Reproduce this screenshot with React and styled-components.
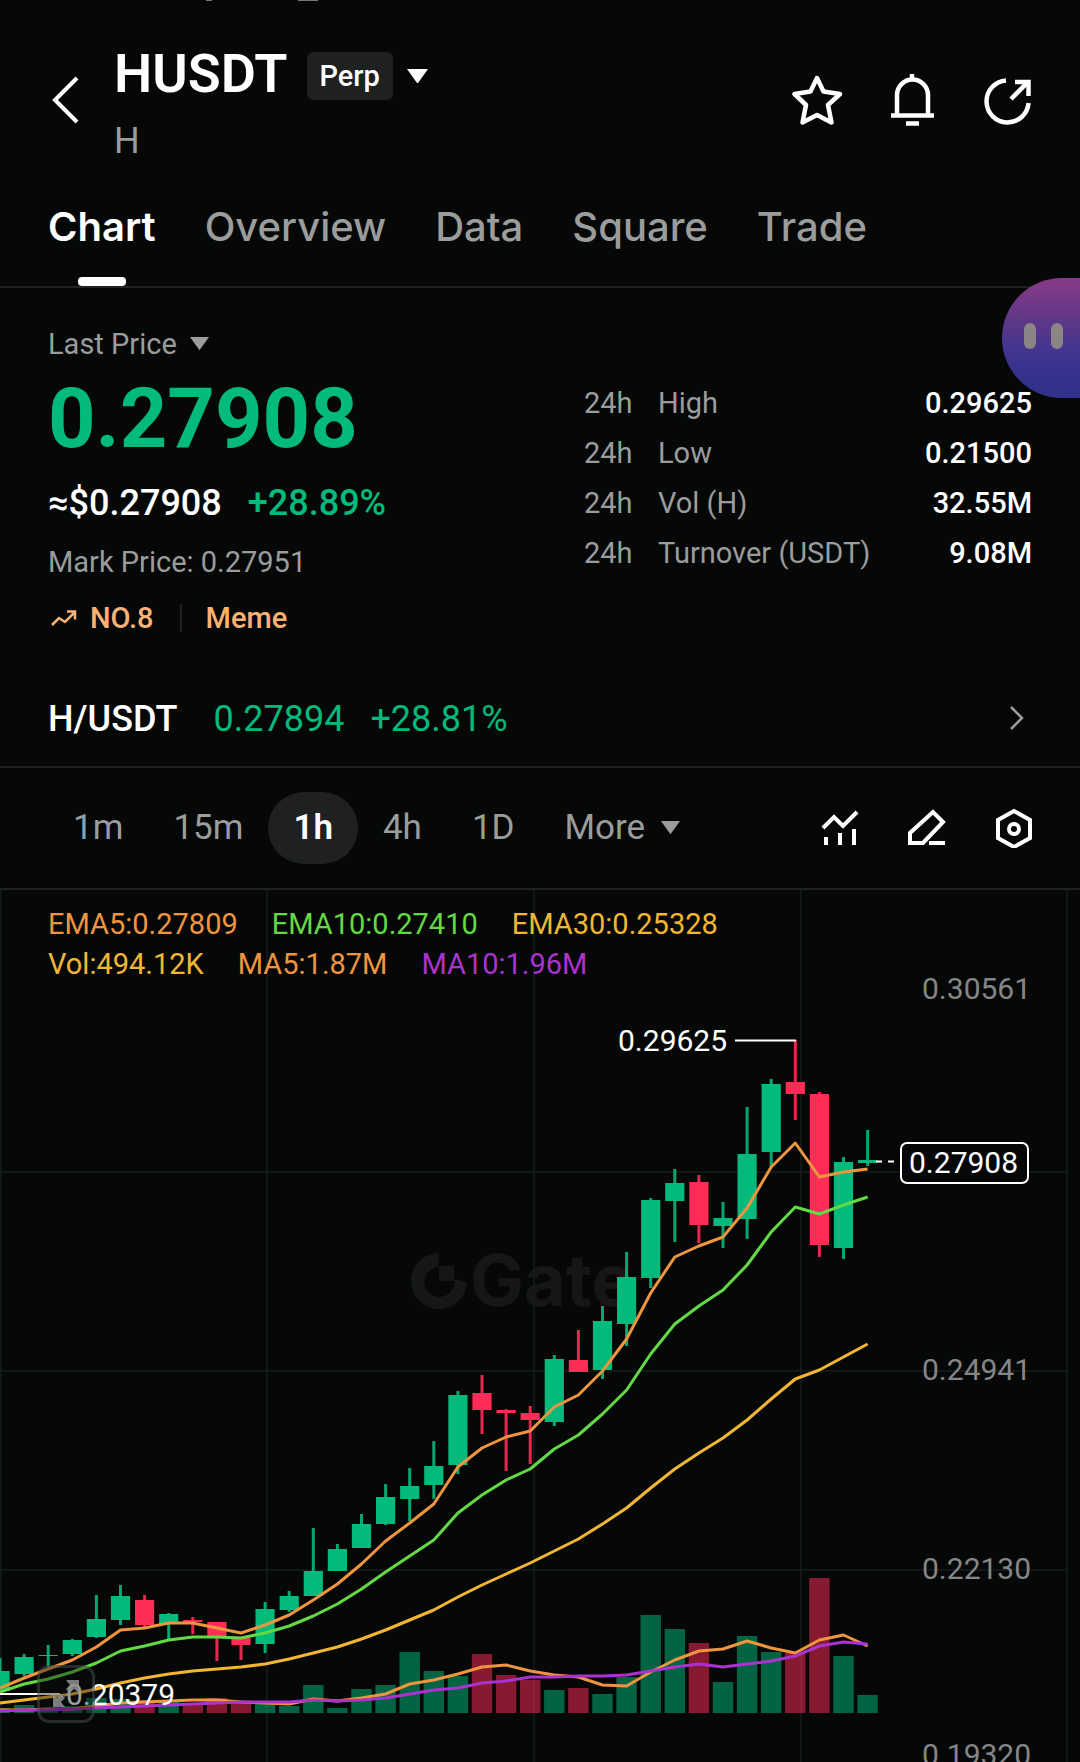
import React, { useState } from 'react';
import styled, { createGlobalStyle } from 'styled-components';

const GREEN = '#02ba7b';
const RED = '#ff2c58';
const ORANGE = '#f0953f';
const LIME = '#63d945';
const YELLOW = '#f2b632';
const PURPLE = '#ac32cf';

const GlobalStyle = createGlobalStyle`
    * {
        box-sizing: border-box;
    }
    body {
        margin: 0;
        background: #060808;
        color: #fff;
        font-family: Roboto, "Liberation Sans", sans-serif;
        font-size: 29px;
        line-height: 40px;
    }
    button {
        border: 0;
        padding: 0;
        background: none;
        color: inherit;
        font: inherit;
        cursor: pointer;
    }
    a {
        color: inherit;
        text-decoration: none;
    }
    svg {
        display: block;
        flex: none;
    }
`

const Page = styled.div`
    position: relative;
    overflow: hidden;
`

const StatusEdge = styled.div`
    display: flex;
    gap: 86px;
    height: 40px;
    padding-left: 206px;
    i {
        width: 6px;
        height: 1px;
        background: #777;
    }
    i + i {
        width: 20px;
    }
`

const Header = styled.header`
    display: flex;
    align-items: center;
    padding: 0 48px;
`

const BackButton = styled.button`
    width: 66px;
`

const TitleBlock = styled.div`
    flex: 1;
`

const TitleRow = styled.div`
    display: flex;
    align-items: center;
    height: 68px;
    padding-top: 4px;
    h1 {
        margin: 0 19px 0 0;
        padding-bottom: 4px;
        font-size: 54px;
        line-height: 60px;
        font-weight: 600;
    }
`

const Badge = styled.span`
    height: 48px;
    margin-right: 14px;
    padding: 0 13px;
    border-radius: 6px;
    background: #1f2121;
    font-weight: 500;
    line-height: 48px;
`

const Subtitle = styled.div`
    margin-top: 14px;
    color: #9b9c9c;
    font-size: 36px;
    line-height: 38px;
`

const IconRow = styled.div`
    display: flex;
    align-items: center;
    gap: ${props => props.$gap}px;
`

const Tabs = styled.nav`
    display: flex;
    gap: 49px;
    padding: 43px 48px 0;
    border-bottom: 2px solid #1f2121;
`

const Tab = styled.a`
    display: flex;
    flex-direction: column;
    align-items: center;
    gap: 26px;
    color: ${props => props.$active ? '#fff' : '#9b9c9c'};
    font-family: Inter, "Liberation Sans", sans-serif;
    font-size: 40px;
    line-height: 48px;
    font-weight: ${props => props.$active ? 600 : 500};
    &::after {
        content: "";
        width: 48px;
        height: 9px;
        border-radius: 4px;
        background: ${props => props.$active ? '#fff' : 'transparent'};
    }
`

const Assistant = styled.button`
    position: absolute;
    top: 278px;
    right: 0;
    display: flex;
    align-items: center;
    gap: 15px;
    width: 78px;
    height: 120px;
    padding: 0 0 4px 22px;
    border-radius: 60px 0 0 60px;
    background: linear-gradient(#883a85, #5b3788 38%, #443590 60%, #32328b 85%);
    i {
        width: 12px;
        height: 26px;
        border-radius: 6px;
        background: #8b8586;
    }
`

const Ticker = styled.section`
    display: flex;
    justify-content: space-between;
    padding: 36px 48px 32px;
`

const PriceType = styled.button`
    display: flex;
    align-items: center;
    gap: 13px;
    color: #9b9c9c;
`

const BigPrice = styled.div`
    margin: 13px 0 20px;
    color: ${GREEN};
    font-size: 83px;
    line-height: 84px;
    font-weight: 700;
`

const Converted = styled.div`
    display: flex;
    gap: 26px;
    font-size: 36px;
    line-height: 44px;
    font-weight: 500;
    span {
        color: ${GREEN};
    }
`

const MarkPrice = styled.div`
    margin: 17px 0 16px;
    color: #9b9c9c;
`

const Tags = styled.div`
    display: flex;
    align-items: center;
    color: #fcb273;
    font-weight: 500;
    svg {
        margin-right: 12px;
    }
    a {
        display: flex;
        align-items: center;
    }
    a + a {
        margin-left: 26px;
        padding-left: 24px;
        border-left: 2px solid #1f2121;
        line-height: 28px;
    }
`

const Stats = styled.table`
    align-self: flex-start;
    width: 448px;
    margin-top: 54px;
    border-collapse: collapse;
    th, td {
        height: 50px;
        padding: 0;
        color: #9b9c9c;
        font-weight: 400;
        text-align: left;
        white-space: nowrap;
    }
    th {
        width: 74px;
    }
    td:last-child {
        color: #fff;
        font-weight: 500;
        text-align: right;
    }
`

const SpotLink = styled.a`
    display: flex;
    align-items: center;
    height: 98px;
    padding: 2px 48px 0;
    border-bottom: 2px solid #1f2121;
    font-size: 36px;
    color: ${GREEN};
    strong {
        margin-right: 36px;
        color: #fff;
        font-weight: 500;
    }
    span {
        margin-right: 26px;
    }
    svg {
        margin-left: auto;
    }
`

const Toolbar = styled.div`
    display: flex;
    align-items: center;
    justify-content: space-between;
    height: 122px;
    padding: 0 48px;
    border-bottom: 2px solid #1f2121;
`

const Periods = styled.div`
    display: flex;
`

const Period = styled.button`
    display: flex;
    align-items: center;
    gap: 16px;
    height: 72px;
    padding: 0 25px;
    border-radius: 36px;
    background: ${props => props.$active ? '#1f2121' : 'none'};
    color: ${props => props.$active ? '#fff' : '#9b9c9c'};
    font-size: 35px;
    font-weight: ${props => props.$active ? 600 : 400};
`

const ChartPanel = styled.section`
    position: relative;
`

const Legend = styled.div`
    position: absolute;
    top: 14px;
    left: 48px;
`

const LegendRow = styled.div`
    display: flex;
    gap: 34px;
`

const LegendItem = styled.span`
    color: ${props => props.$color};
`

const ExpandButton = styled.button`
    position: absolute;
    left: 37px;
    bottom: 39px;
    width: 58px;
    height: 58px;
    border: 3px solid rgba(120, 124, 124, 0.3);
    border-radius: 12px;
    background: rgba(10, 12, 12, 0.4);
    display: flex;
    align-items: center;
    justify-content: center;
`

const ChartSvg = styled.svg`
    width: 100%;
    height: auto;
    text {
        font-size: 30px;
        fill: #fff;
    }
    .axis {
        fill: #858686;
    }
    .brand {
        font: 700 72px Inter, sans-serif;
        fill: #151717;
    }
`

const stats = [
    ['High', '0.29625'],
    ['Low', '0.21500'],
    ['Vol (H)', '32.55M'],
    ['Turnover (USDT)', '9.08M'],
];

const STEP = 24.1;

// [up, body top, body bottom, wick top, wick bottom, volume top]
const candles = [
    [1, 1671, 1691, 1658, 1692, 1708],
    [1, 1657, 1674, 1654, 1676, 1705],
    [1, 1655, 1656, 1645, 1667, 1709],
    [1, 1640, 1654, 1639, 1656, 1706],
    [1, 1619, 1637, 1595, 1638, 1698],
    [1, 1596, 1620, 1585, 1625, 1699],
    [0, 1600, 1625, 1595, 1627, 1700],
    [1, 1614, 1624, 1613, 1639, 1701],
    [0, 1620, 1622, 1617, 1634, 1703],
    [0, 1622, 1636, 1622, 1661, 1698],
    [0, 1638, 1645, 1638, 1660, 1703],
    [1, 1609, 1644, 1602, 1653, 1703],
    [1, 1596, 1610, 1591, 1612, 1706],
    [1, 1571, 1596, 1528, 1596, 1685],
    [1, 1549, 1571, 1544, 1571, 1708],
    [1, 1524, 1548, 1514, 1548, 1689],
    [1, 1497, 1524, 1484, 1525, 1685],
    [1, 1486, 1499, 1468, 1521, 1652],
    [1, 1466, 1485, 1441, 1499, 1671],
    [1, 1395, 1465, 1391, 1474, 1676],
    [0, 1393, 1410, 1375, 1434, 1654],
    [0, 1410, 1413, 1409, 1471, 1675],
    [0, 1413, 1420, 1406, 1464, 1680],
    [1, 1359, 1422, 1355, 1426, 1690],
    [0, 1360, 1372, 1330, 1372, 1688],
    [1, 1321, 1370, 1306, 1379, 1694],
    [1, 1277, 1324, 1252, 1346, 1677],
    [1, 1200, 1278, 1198, 1288, 1615],
    [1, 1183, 1201, 1169, 1242, 1629],
    [0, 1182, 1225, 1175, 1243, 1643],
    [1, 1218, 1226, 1202, 1248, 1682],
    [1, 1154, 1219, 1107, 1239, 1636],
    [1, 1084, 1152, 1079, 1167, 1652],
    [0, 1082, 1094, 1040, 1120, 1653],
    [0, 1094, 1245, 1092, 1257, 1578],
    [1, 1162, 1248, 1157, 1259, 1656],
    [1, 1160, 1163, 1130, 1166, 1695],
];

const ema5 = [1688, 1678, 1669, 1660, 1647, 1630, 1628, 1623, 1623, 1628, 1633, 1625, 1615, 1600, 1584, 1564, 1541, 1523, 1504, 1467, 1448, 1437, 1431, 1407, 1395, 1371, 1339, 1293, 1257, 1246, 1237, 1208, 1167, 1143, 1177, 1172, 1169];
const ema10 = [1692, 1684, 1679, 1672, 1663, 1651, 1646, 1640, 1637, 1637, 1638, 1633, 1626, 1616, 1604, 1589, 1572, 1556, 1540, 1513, 1495, 1480, 1469, 1449, 1435, 1414, 1390, 1354, 1324, 1306, 1290, 1265, 1232, 1207, 1214, 1205, 1197];
const ema30 = [1703, 1700, 1697, 1694, 1689, 1683, 1678, 1674, 1671, 1669, 1667, 1664, 1659, 1653, 1647, 1639, 1630, 1620, 1610, 1597, 1585, 1574, 1563, 1551, 1539, 1524, 1508, 1488, 1469, 1453, 1438, 1420, 1399, 1379, 1370, 1357, 1344];
const volMa5 = [1710, 1710, 1709, 1709, 1706, 1703, 1702, 1701, 1700, 1700, 1702, 1703, 1704, 1699, 1701, 1698, 1694, 1684, 1680, 1674, 1667, 1665, 1671, 1675, 1677, 1685, 1686, 1672, 1660, 1651, 1649, 1641, 1648, 1653, 1640, 1635, 1646];
const volMa10 = [1711, 1710, 1710, 1709, 1708, 1707, 1706, 1705, 1704, 1703, 1702, 1702, 1702, 1700, 1701, 1700, 1698, 1694, 1690, 1688, 1683, 1681, 1677, 1677, 1676, 1676, 1675, 1671, 1667, 1664, 1667, 1664, 1661, 1656, 1646, 1642, 1644];

const Caret = ({ size = 19 }) => (
    <svg width={size} height={size * 0.7} viewBox="0 0 20 14" fill="currentColor"><path d="M0 0h20L10 14z" /></svg>
);

const Line = ({ values, color }) => (
    <polyline
        points={values.map((y, i) => `${i * STEP},${y}`).join(' ')}
        fill="none"
        stroke={color}
        strokeWidth="3"
        strokeLinejoin="round"
    />
);

const PriceChart = () => (
    <ChartSvg viewBox="0 890 1080 872" role="img" aria-label="HUSDT 1h candles">
        <path d="M439 1253A28 28 0 1 0 467 1282L454 1279A15 15 0 1 1 438 1267Z" fill="#151717" />
        <path d="M439 1266h15v15h-15z" fill="#151717" />
        <text className="brand" x="470" y="1306">Gate</text>

        <g stroke="#191b1b" strokeWidth="1.5">
            {[1, 267, 534, 801, 1067].map(x => <path key={x} d={`M${x} 890V1762`} />)}
            {[1172, 1371, 1570].map(y => <path key={y} d={`M0 ${y}H1067`} />)}
        </g>

        {candles.map(([up, top, bottom, high, low, vol], i) => (
            <g key={i} fill={up ? GREEN : RED}>
                <rect x={i * STEP - 10.2} y={vol} width="20.4" height={1713 - vol} opacity="0.52" />
                <rect x={i * STEP - 1.5} y={high} width="3" height={low - high} opacity="0.9" />
                <rect x={i * STEP - 9.6} y={top} width="19.2" height={bottom - top} />
            </g>
        ))}

        <Line values={ema30} color={YELLOW} />
        <Line values={ema10} color={LIME} />
        <Line values={ema5} color={ORANGE} />
        <Line values={volMa5} color={ORANGE} />
        <Line values={volMa10} color={PURPLE} />

        <text className="axis" x="922" y="999">0.30561</text>
        <text className="axis" x="922" y="1380">0.24941</text>
        <text className="axis" x="922" y="1579">0.22130</text>
        <text className="axis" x="922" y="1765">0.19320</text>

        <path d="M735 1040.500H796M0 1694H60" stroke="#fff" strokeWidth="2" />
        <text x="618" y="1051">0.29625</text>
        <text x="66" y="1705">0.20379</text>

        <path d="M876 1161.500H900" stroke="#fff" strokeWidth="2" strokeDasharray="6 6" />
        <rect x="901" y="1143" width="127" height="40" rx="6" fill="#060808" stroke="#fff" strokeWidth="2" />
        <text x="909" y="1173">0.27908</text>
    </ChartSvg>
);

const App = () => {
    const [tab, setTab] = useState('Chart');
    const [period, setPeriod] = useState('1h');

    return (
        <Page>
            <GlobalStyle />
            <StatusEdge><i /><i /></StatusEdge>

            <Header>
                <BackButton aria-label="Back">
                    <svg width="34" height="48" viewBox="0 0 34 48" fill="none" stroke="#fff" strokeWidth="4"><path d="M29 2L7 24l22 22" /></svg>
                </BackButton>
                <TitleBlock>
                    <TitleRow>
                        <h1>HUSDT</h1>
                        <Badge>Perp</Badge>
                        <Caret size={21} />
                    </TitleRow>
                    <Subtitle>H</Subtitle>
                </TitleBlock>
                <IconRow $gap={44}>
                    <button aria-label="Favourite">
                        <svg width="52" height="52" viewBox="0 0 52 52" fill="none" stroke="#fff" strokeWidth="4.500" strokeLinejoin="round">
                            <path d="M25 4l6.500 13.500L48 20 36 31l3.500 17.500L25 41 10.500 48.500 14 31 2.500 20l16-2.500z" />
                        </svg>
                    </button>
                    <button aria-label="Alerts">
                        <svg width="52" height="52" viewBox="0 0 52 52" fill="none" stroke="#fff" strokeWidth="4.500">
                            <path d="M24 0v6M9 41V21a15.500 15.500 0 0 1 31 0v20M3 41.500h43M18 49.500h13" />
                        </svg>
                    </button>
                    <button aria-label="Share">
                        <svg width="48" height="52" viewBox="0 0 48 52" fill="none" stroke="#fff" strokeWidth="4.500">
                            <path d="M22 6.500A21 21 0 1 0 44.500 29M27 25L43 9M31 8h13.500v14" />
                        </svg>
                    </button>
                </IconRow>
            </Header>

            <Tabs>
                {['Chart', 'Overview', 'Data', 'Square', 'Trade'].map(name => (
                    <Tab key={name} href={`#${name.toLowerCase()}`} $active={tab === name} onClick={() => setTab(name)}>{name}</Tab>
                ))}
            </Tabs>

            <Ticker>
                <div>
                    <PriceType>Last Price <Caret /></PriceType>
                    <BigPrice>0.27908</BigPrice>
                    <Converted>≈$0.27908 <span>+28.89%</span></Converted>
                    <MarkPrice>Mark Price: 0.27951</MarkPrice>
                    <Tags>
                        <a href="#rank">
                            <svg width="30" height="20" viewBox="0 0 30 20" fill="none" stroke="currentColor" strokeWidth="2.500">
                                <path d="M4 17l7-7 6 4L27 4M19 3.500h8v8" />
                            </svg>
                            NO.8
                        </a>
                        <a href="#meme">Meme</a>
                    </Tags>
                </div>
                <Stats>
                    <tbody>
                        {stats.map(([label, value]) => (
                            <tr key={label}>
                                <th scope="row">24h</th>
                                <td>{label}</td>
                                <td>{value}</td>
                            </tr>
                        ))}
                    </tbody>
                </Stats>
            </Ticker>

            <SpotLink href="#spot">
                <strong>H/USDT</strong>
                <span>0.27894</span>
                <span>+28.81%</span>
                <svg width="30" height="30" viewBox="0 0 30 30" fill="none" stroke="#9b9c9c" strokeWidth="2.500"><path d="M9 3l11 11L9 25" /></svg>
            </SpotLink>

            <Toolbar>
                <Periods>
                    {['1m', '15m', '1h', '4h', '1D'].map(name => (
                        <Period key={name} $active={period === name} onClick={() => setPeriod(name)}>{name}</Period>
                    ))}
                    <Period>More <Caret /></Period>
                </Periods>
                <IconRow $gap={46}>
                    <button aria-label="Indicators">
                        <svg width="40" height="40" viewBox="0 0 40 40" fill="none" stroke="#fff" strokeWidth="4">
                            <path d="M3 20l11-11 9 9L37 4M6 29v8M20 25v12M34 21v16" />
                        </svg>
                    </button>
                    <button aria-label="Draw">
                        <svg width="40" height="40" viewBox="0 0 40 40" fill="none" stroke="#fff" strokeWidth="4">
                            <path d="M4 35V25L27 4l10 10-20 21zM23 35h16" />
                        </svg>
                    </button>
                    <button aria-label="Settings">
                        <svg width="40" height="40" viewBox="0 0 40 40" fill="none" stroke="#fff" strokeWidth="4">
                            <path d="M22 3l16 9v18l-16 9-16-9V12z" /><circle cx="22" cy="21" r="5" />
                        </svg>
                    </button>
                </IconRow>
            </Toolbar>

            <ChartPanel>
                <PriceChart />
                <Legend>
                    <LegendRow>
                        <LegendItem $color={ORANGE}>EMA5:0.27809</LegendItem>
                        <LegendItem $color={LIME}>EMA10:0.27410</LegendItem>
                        <LegendItem $color={YELLOW}>EMA30:0.25328</LegendItem>
                    </LegendRow>
                    <LegendRow>
                        <LegendItem $color={YELLOW}>Vol:494.12K</LegendItem>
                        <LegendItem $color={ORANGE}>MA5:1.87M</LegendItem>
                        <LegendItem $color={PURPLE}>MA10:1.96M</LegendItem>
                    </LegendRow>
                </Legend>
                <ExpandButton aria-label="Full screen">
                    <svg width="30" height="30" viewBox="0 0 30 30" fill="#8f9292" opacity="0.85">
                        <path d="M15 1h13v13l-5-4-4 4-4-4 4-4zM2 15l4 4 4-4 4 4-4 4 4 5H2z" />
                    </svg>
                </ExpandButton>
            </ChartPanel>

            <Assistant aria-label="Assistant"><i /><i /></Assistant>
        </Page>
    );
}

export default App;
